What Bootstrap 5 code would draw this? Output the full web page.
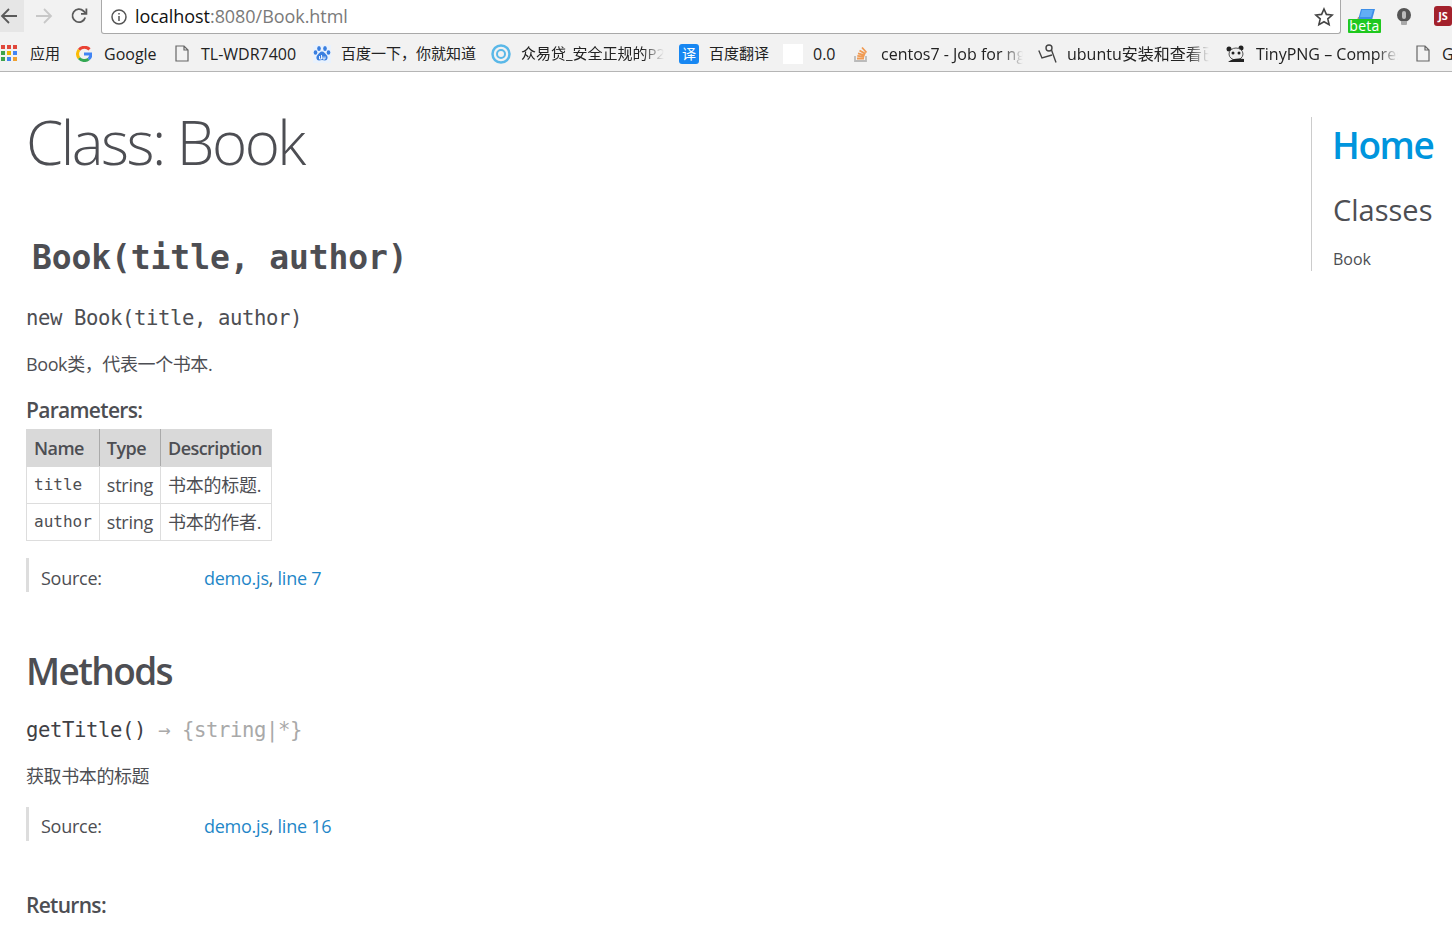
<!DOCTYPE html>
<html lang="en">
<head>
  <meta charset="UTF-8" />
  <title>Class: Book</title>
  <link href="https://cdn.jsdelivr.net/npm/bootstrap@5.3.0/dist/css/bootstrap.min.css" rel="stylesheet" />
  <style>
    html, body { height: 943px; overflow: hidden; }
    body {
      font-family: "Open Sans", "Noto Sans CJK SC", sans-serif;
      color: #4d4e53;
      background: #fff;
    }
    /* browser chrome */
    .tool-row { height: 34px; background: #f2f2f2; overflow: hidden; }
    .nav-btn { width: 24px; height: 32px; }
    .nav-btn-active { background: #e6e6e6; }
    .nav-reload { margin-left: 11px; }
    .omni {
      width: 1240px; height: 34px; margin-left: 10px; flex: none;
      background: #fff; border: 1px solid #a9a9a9; border-top: 0;
      border-radius: 0 0 3px 3px; padding: 0 6px 0 9px;
      font-size: 18px; letter-spacing: -0.05px; color: #7a7a7a;
    }
    .omni b { font-weight: 400; color: #111; }
    .ext-icon { width: 34px; height: 34px; flex: none; }
    .ext-beta { margin-left: 6px; }
    .ext-bulb { margin-left: 6px; }
    .beta-tag { position: absolute; left: 1px; bottom: 1px; width: 33px; height: 14px; background: #1fc81f; border-radius: 1px; text-align: center; font-size: 14px; line-height: 13px; letter-spacing: .3px; color: #fff; }
    .js-ext { width: 18px; height: 20px; margin: 6px 0 0 13px; flex: none; background: #a3212c; border-radius: 3px; color: #fff; font-size: 11px; font-weight: 700; line-height: 20px; text-align: center; overflow: hidden; }
    .book-row {
      height: 38px; padding-top: 2px; background: #f2f2f2; border-bottom: 1px solid #b5b5b5;
      font-size: 15px; color: #222; white-space: nowrap; overflow: hidden;
    }
    .book-item { display: flex; align-items: center; gap: 10px; flex: none; }
    .book-latin { font-size: 16px; }
    .gap-wide { gap: 12px; }
    .book-text { overflow: hidden; display: block; }
    .book-fade { -webkit-mask-image: linear-gradient(to right, #000 85%, transparent); mask-image: linear-gradient(to right, #000 85%, transparent); }
    .ico { flex: none; display: block; }
    .w-apps { width: 76px; padding-left: 1px; }
    .w-google { width: 99px; }
    .w-tl { width: 138px; }
    .w-baidu { width: 178px; }
    .w-zyd { width: 188px; }
    .w-fy { width: 104px; }
    .w-zero { width: 70px; }
    .w-so { width: 185px; }
    .w-ub { width: 188px; }
    .w-png { width: 190px; }
    .t-zyd { width: 143px; }
    .t-so { width: 142px; }
    .t-ub { width: 142px; }
    .t-png { width: 142px; }
    .fy-icon { width: 20px; height: 20px; border-radius: 3px; background: #1787f2; color: #fff; font-size: 14px; line-height: 20px; text-align: center; flex: none; }
    .blank-icon { width: 20px; height: 20px; background: #fff; flex: none; }

    /* doc page */
    .doc-wrap { padding-left: 26px; }
    .doc-main { width: 1285px; flex: none; }
    .page-title {
      font-size: 60px; font-weight: 300; letter-spacing: -2.5px;
      margin: 34px 0 0; line-height: 72px;
    }
    .mono { font-family: "DejaVu Sans Mono", monospace; }
    .sig-name { font-size: 33px; font-weight: 700; line-height: 40px; margin: 60px 0 0 6px; letter-spacing: -0.1px; }
    .sig-new { font-size: 20.6px; line-height: 28px; margin: 26px 0 0; letter-spacing: -0.4px; }
    .doc-text { font-size: 18px; line-height: 26px; margin: 19px 0 0; letter-spacing: -0.4px; }
    .doc-text-tight { margin-top: 18px; }
    .sub-head { font-size: 21px; font-weight: 600; line-height: 28px; margin: 19px 0 5px; letter-spacing: -0.7px; }
    .returns-head { margin-top: 50px; }
    .param-table { border-collapse: collapse; font-size: 18px; letter-spacing: -0.25px; }
    .param-table th, .param-table td { border: 1px solid #ddd; padding: 0 7px; height: 37px; white-space: nowrap; }
    .param-table th { background: #d9d9d9; font-weight: 600; letter-spacing: -0.55px; border-color: #d9d9d9 #aaa #d9d9d9 #d9d9d9; }
    .param-table th:last-child { border-right-color: #d9d9d9; }
    .param-table th:last-child, .param-table td:last-child { padding-right: 9px; }
    .param-table .mono { font-size: 16px; letter-spacing: 0; }
    .source-box {
      border-left: 3px solid #ddd; padding: 7px 0 0 12px; height: 34px;
      font-size: 18px; letter-spacing: -0.25px; margin-top: 17px;
    }
    .source-box-low { margin-top: 18px; padding-top: 6px; }
    .source-label { width: 163px; }
    .source-box a { color: #1f87c8; text-decoration: none; }
    .methods-head { font-size: 37px; font-weight: 600; letter-spacing: -1.6px; line-height: 48px; margin: 55px 0 0; }
    .method-sig { font-size: 20.6px; font-weight: 400; line-height: 30px; margin: 20px 0 0; letter-spacing: -0.4px; color: #3f4045; }
    .method-sig span { color: #a9a9a9; }
    .side-nav {
      margin-top: 45px; height: 154px; border-left: 1px solid #ccc; padding-left: 20px;
    }
    .side-home { font-size: 37px; font-weight: 600; line-height: 44px; letter-spacing: -1.4px; color: #0095dd; text-decoration: none; display: block; margin-top: 6px; }
    .side-head { font-size: 29px; font-weight: 400; line-height: 40px; margin: 23px 0 0 1px; white-space: nowrap; }
    .side-link { font-size: 16px; color: #4d4e53; text-decoration: none; display: block; margin: 17px 0 0 1px; }
  </style>
</head>
<body>
<div class="tool-row d-flex align-items-start">
  <div class="nav-btn nav-btn-active d-flex align-items-center">
    <svg width="18" height="18" viewBox="0 0 18 18" fill="none" stroke="#5a5a5a" stroke-width="1.8"><path d="M17 9H2M9 2 2 9l7 7"/></svg>
  </div>
  <div class="nav-btn d-flex align-items-center justify-content-center ms-2">
    <svg width="18" height="18" viewBox="0 0 18 18" fill="none" stroke="#c8c8c8" stroke-width="1.8"><path d="M1 9h15M9 2l7 7-7 7"/></svg>
  </div>
  <div class="nav-btn nav-reload d-flex align-items-center justify-content-center">
    <svg width="18" height="18" viewBox="0 0 18 18" fill="none" stroke="#5a5a5a" stroke-width="1.8"><path d="M15.2 10.5A6.500 6.500 0 1 1 13.500 4L16 6.300"/><path d="M16.400 1.500v5.400H11"/></svg>
  </div>
  <div class="omni d-flex align-items-center">
    <svg class="ico me-2" width="16" height="16" viewBox="0 0 16 16" fill="none" stroke="#555" stroke-width="1.5"><circle cx="8" cy="8" r="7"/><path d="M8 7v5M8 4v1.600"/></svg>
    <span><b>localhost</b>:8080/Book.html</span>
    <svg class="ico ms-auto" width="20" height="20" viewBox="0 0 20 20" fill="none" stroke="#444" stroke-width="1.6"><path d="m10 2 2.400 5.400 5.800.6-4.400 3.900 1.300 5.800-5.100-3-5.100 3 1.300-5.800L1.800 8l5.800-.6z"/></svg>
  </div>
  <div class="ext-icon ext-beta position-relative">
    <svg class="ico" width="34" height="34" viewBox="0 0 34 34"><path d="M10 20l1-3h3v3z" fill="#f0a030"/><path d="M14 9h14l-3 11H11z" fill="#3d8ee8"/><path d="M15 10h11l-2 7H13z" fill="#62aef5"/></svg>
    <span class="beta-tag">beta</span>
  </div>
  <div class="ext-icon ext-bulb d-flex justify-content-center pt-2">
    <svg class="ico" width="16" height="18" viewBox="0 0 16 18"><circle cx="8" cy="7" r="7" fill="#555"/><rect x="6" y="3" width="4" height="8" rx="2" fill="#bbb"/><rect x="5" y="13" width="6" height="4" rx="1" fill="#aaa"/></svg>
  </div>
  <div class="js-ext">JS</div>
</div>
<div class="book-row d-flex align-items-center">
  <div class="book-item w-apps gap-wide">
    <svg class="ico" width="17" height="17" viewBox="0 0 17 17">
      <rect width="4" height="4" fill="#e0483c"/><rect x="6" width="4" height="4" fill="#e0483c"/><rect x="12" width="4" height="4" fill="#e0483c"/>
      <rect y="6" width="4" height="4" fill="#3fa34d"/><rect x="6" y="6" width="4" height="4" fill="#f0b400"/><rect x="12" y="6" width="4" height="4" fill="#4285f4"/>
      <rect y="12" width="4" height="4" fill="#3fa34d"/><rect x="6" y="12" width="4" height="4" fill="#4285f4"/><rect x="12" y="12" width="4" height="4" fill="#f0a030"/>
    </svg>
    <span>应用</span>
  </div>
  <div class="book-item w-google gap-wide book-latin">
    <svg class="ico" width="16" height="16" viewBox="0 0 16 16" fill="none" stroke-width="3"><path d="M13.500 3.400A7 7 0 0 0 3 3.900" stroke="#ea4335"/><path d="M3 3.900a7 7 0 0 0 0 8.200" stroke="#fbbc05"/><path d="M3 12.100a7 7 0 0 0 9.600 1" stroke="#34a853"/><path d="M12.600 13.100A6.500 6.500 0 0 0 15 8H8" stroke="#4285f4"/></svg>
    <span>Google</span>
  </div>
  <div class="book-item w-tl gap-wide book-latin">
    <svg class="ico" width="14" height="17" viewBox="0 0 14 17" fill="none" stroke="#666" stroke-width="1.2"><path d="M1 1h8l4 4v11H1zM9 1v4h4"/></svg>
    <span>TL-WDR7400</span>
  </div>
  <div class="book-item w-baidu">
    <svg class="ico" width="18" height="18" viewBox="0 0 18 18" fill="#3a7fe0"><rect width="18" height="18" fill="#e9f2fd"/><ellipse cx="6" cy="3.500" rx="1.800" ry="2.500"/><ellipse cx="12" cy="3.500" rx="1.800" ry="2.500"/><ellipse cx="2.500" cy="7.500" rx="1.800" ry="2.200"/><ellipse cx="15.500" cy="7.500" rx="1.800" ry="2.200"/><path d="M9 6.500c2 0 3 2 4.500 3.500 2 2 1 5.500-1.500 5.500-1 0-2-.5-3-.5s-2 .5-3 .5c-2.500 0-3.500-3.500-1.500-5.500C6 8.500 7 6.500 9 6.500z"/><path d="M6.500 11v3h2v-4M10 11.500V14h2v-2.500" fill="none" stroke="#fff" stroke-width=".9"/></svg>
    <span>百度一下，你就知道</span>
  </div>
  <div class="book-item w-zyd">
    <svg class="ico" width="20" height="20" viewBox="0 0 20 20" fill="none" stroke="#5ab8e8"><circle cx="10" cy="10" r="8.500" stroke-width="2.500"/><circle cx="10" cy="10" r="4" stroke-width="2"/></svg>
    <span class="book-text book-fade t-zyd">众易贷_安全正规的P2P</span>
  </div>
  <div class="book-item w-fy">
    <div class="fy-icon">译</div>
    <span>百度翻译</span>
  </div>
  <div class="book-item w-zero book-latin">
    <div class="blank-icon"></div>
    <span>0.0</span>
  </div>
  <div class="book-item w-so gap-wide book-latin">
    <svg class="ico" width="16" height="18" viewBox="0 0 16 18" fill="none" stroke="#f09a52" stroke-width="1.8"><path d="M2 11v5h11v-5" stroke="#bbb"/><path d="M4 13.500h7M4.300 10.800l7 .8M5 8.300l6.800 2M6.500 5.500l6 3.400M9 2.500l4.500 5"/></svg>
    <span class="book-text book-fade t-so">centos7 - Job for ng</span>
  </div>
  <div class="book-item w-ub book-latin">
    <svg class="ico" width="19" height="19" viewBox="0 0 19 19" fill="none" stroke="#444" stroke-width="1.4"><circle cx="11" cy="4" r="3"/><path d="M13.500 6 18 18.500M.8 6.500 4 14l10-3"/></svg>
    <span class="book-text book-fade t-ub">ubuntu安装和查看已安装</span>
  </div>
  <div class="book-item w-png book-latin">
    <svg class="ico" width="20" height="18" viewBox="0 0 20 18"><circle cx="3" cy="4" r="2.500" fill="#222"/><circle cx="15" cy="3" r="2.500" fill="#222"/><ellipse cx="10" cy="9" rx="7" ry="6" fill="#eee" stroke="#555"/><circle cx="7" cy="8" r="1.500" fill="#222"/><circle cx="13" cy="8" r="1.500" fill="#222"/><path d="M2 17c4-4 12-4 16-3v3z" fill="#222"/></svg>
    <span class="book-text book-fade t-png">TinyPNG – Compress</span>
  </div>
  <div class="book-item gap-wide book-latin">
    <svg class="ico" width="14" height="17" viewBox="0 0 14 17" fill="none" stroke="#666" stroke-width="1.2"><path d="M1 1h8l4 4v11H1zM9 1v4h4"/></svg>
    <span>G</span>
  </div>
</div>

<div class="doc-wrap d-flex">
  <main class="doc-main">
    <h1 class="page-title">Class: Book</h1>
    <h4 class="sig-name mono">Book(title, author)</h4>
    <div class="sig-new mono">new Book(title, author)</div>
    <p class="doc-text">Book类，代表一个书本.</p>
    <h5 class="sub-head">Parameters:</h5>
    <table class="param-table">
      <thead><tr><th>Name</th><th>Type</th><th>Description</th></tr></thead>
      <tbody>
        <tr><td class="mono">title</td><td>string</td><td>书本的标题.</td></tr>
        <tr><td class="mono">author</td><td>string</td><td>书本的作者.</td></tr>
      </tbody>
    </table>
    <div class="source-box d-flex">
      <div class="source-label">Source:</div>
      <div><a href="#">demo.js</a>, <a href="#">line 7</a></div>
    </div>
    <h3 class="methods-head">Methods</h3>
    <h4 class="method-sig mono">getTitle() <span>→ {string|*}</span></h4>
    <p class="doc-text doc-text-tight">获取书本的标题</p>
    <div class="source-box source-box-low d-flex">
      <div class="source-label">Source:</div>
      <div><a href="#">demo.js</a>, <a href="#">line 16</a></div>
    </div>
    <h5 class="sub-head returns-head">Returns:</h5>
  </main>
  <nav class="side-nav">
    <a class="side-home" href="#">Home</a>
    <h3 class="side-head">Classes</h3>
    <a class="side-link" href="#">Book</a>
  </nav>
</div>
<script src="https://cdn.jsdelivr.net/npm/bootstrap@5.3.0/dist/js/bootstrap.bundle.min.js"></script>
</body>
</html>
